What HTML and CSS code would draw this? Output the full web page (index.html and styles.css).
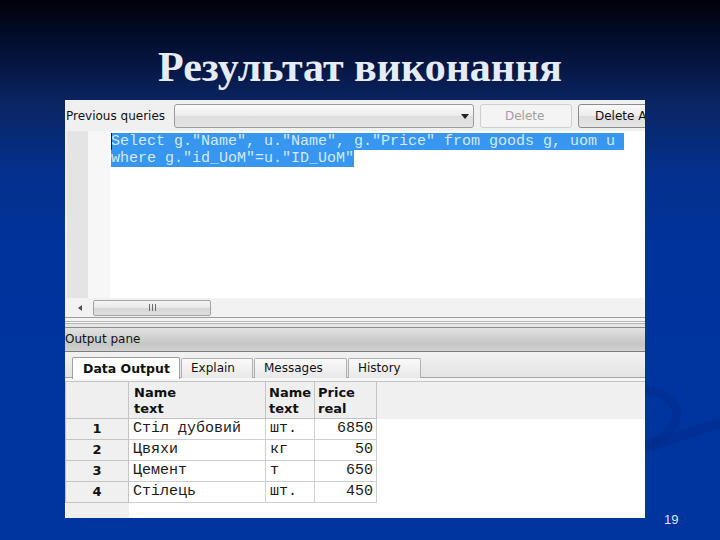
FILE: index.html
```html
<!DOCTYPE html>
<html lang="uk">
<head>
<meta charset="utf-8">
<title>Результат виконання</title>
<link rel="stylesheet" href="styles.css">
</head>
<body>
<div class="slide">
  <svg class="swoosh" width="80" height="160" viewBox="0 0 80 160" aria-hidden="true">
    <path d="M0,8 C22,10 36,22 30,40 C26,50 14,58 4,62" fill="none" stroke="#002c8a" stroke-width="9" stroke-linecap="round" opacity="0.45"/>
    <path d="M0,66 C24,58 50,48 80,40" fill="none" stroke="#002c8a" stroke-width="10" stroke-linecap="round" opacity="0.45"/>
  </svg>
  <h1 class="title">Результат виконання</h1>
  <div class="content">
    <div class="panel">
      <div class="toolbar">
        <span class="label">Previous queries</span>
        <div class="combo"><span class="arrow"></span></div>
        <button class="btn btn-disabled">Delete</button>
        <button class="btn btn-all">Delete All</button>
      </div>
      <div class="code-wrap">
        <div class="gutter1"></div>
        <div class="gutter2"></div>
        <div class="code">
          <div class="line"><span class="caret"></span><span class="sel">Select g."Name", u."Name", g."Price" from goods g, uom u </span></div>
          <div class="line"><span class="sel">where g."id_UoM"=u."ID_UoM"</span></div>
        </div>
      </div>
      <div class="hscroll">
        <span class="sarrow"></span>
        <div class="thumb"><span class="grip"></span></div>
      </div>
      <div class="splitter"></div>
      <div class="pane-head">Output pane</div>
      <div class="tabs">
        <div class="tab tab-active tab-data">Data Output</div>
        <div class="tab tab-explain">Explain</div>
        <div class="tab tab-messages">Messages</div>
        <div class="tab tab-history">History</div>
      </div>
      <table class="grid">
        <colgroup>
          <col class="c-rn"><col class="c-name"><col class="c-uom"><col class="c-price"><col>
        </colgroup>
        <thead>
          <tr class="hrow">
            <th class="rn-head"></th>
            <th>Name<br>text</th>
            <th>Name<br>text</th>
            <th>Price<br>real</th>
            <th class="fill-head"></th>
          </tr>
        </thead>
        <tbody>
          <tr class="drow"><td class="rn">1</td><td>Стіл дубовий</td><td>шт.</td><td class="num">6850</td><td class="fill"></td></tr>
          <tr class="drow"><td class="rn">2</td><td>Цвяхи</td><td>кг</td><td class="num">50</td><td class="fill"></td></tr>
          <tr class="drow"><td class="rn">3</td><td>Цемент</td><td>т</td><td class="num">650</td><td class="fill"></td></tr>
          <tr class="drow"><td class="rn">4</td><td>Стілець</td><td>шт.</td><td class="num">450</td><td class="fill"></td></tr>
          <tr class="rest"><td class="rn-rest"></td><td class="fill" colspan="4"></td></tr>
        </tbody>
      </table>
    </div>
    <div class="slide-num">19</div>
  </div>
</div>
</body>
</html>
```

FILE: styles.css
```css
* { box-sizing: border-box; }

html, body {
  margin: 0;
  padding: 0;
}

body {
  width: 720px;
  height: 540px;
  overflow: hidden;
  background: #00339c;
}

.slide {
  position: relative;
  width: 720px;
  height: 540px;
  background: linear-gradient(180deg, #00020a 0%, #04123a 10%, #0a2562 19%, #04308e 32%, #00339c 46%, #00349f 100%);
  overflow: hidden;
}

.swoosh {
  position: absolute;
  left: 645px;
  top: 382px;
}

.title {
  margin: 0;
  padding-top: 46px;
  height: 100px;
  text-align: center;
  font-family: "Liberation Serif", "DejaVu Serif", serif;
  font-weight: bold;
  font-size: 42px;
  line-height: 42px;
  color: #e6ecf7;
}

.content {
  display: flex;
  align-items: flex-end;
  padding-left: 65px;
}

.panel {
  position: relative;
  width: 580px;
  height: 418px;
  background: #f0f0f0;
  overflow: hidden;
  display: flex;
  flex-direction: column;
  font-family: "DejaVu Sans", "Liberation Sans", sans-serif;
  font-size: 12px;
  color: #111;
}

.slide-num {
  margin-left: 19px;
  margin-bottom: -9px;
  font-family: "Liberation Sans", Arial, sans-serif;
  font-size: 13px;
  line-height: 14px;
  color: #dce6ff;
}

/* toolbar */
.toolbar {
  height: 31px;
  flex: none;
  display: flex;
  align-items: center;
  padding-left: 1px;
  background: #f0f0f0;
  white-space: nowrap;
}

.label {
  width: 108px;
  flex: none;
}

.combo {
  position: relative;
  width: 300px;
  height: 24px;
  flex: none;
  border: 1px solid #9c9c9c;
  border-radius: 3px;
  background: linear-gradient(180deg, #fbfbfb 0%, #ececec 50%, #dedede 51%, #e4e4e4 100%);
}

.arrow {
  position: absolute;
  right: 4px;
  top: 9px;
  width: 0;
  height: 0;
  border-left: 4px solid transparent;
  border-right: 4px solid transparent;
  border-top: 5px solid #222;
}

.btn {
  height: 24px;
  flex: none;
  margin: 0 0 0 6px;
  padding: 0;
  border: 1px solid #a8a8a8;
  border-radius: 3px;
  background: linear-gradient(180deg, #fafafa 0%, #ececec 50%, #dcdcdc 51%, #e6e6e6 100%);
  font-family: "DejaVu Sans", "Liberation Sans", sans-serif;
  font-size: 12px;
  color: #111;
  text-align: left;
  white-space: nowrap;
}

.btn-disabled {
  width: 92px;
  padding-left: 24px;
  color: #a0a0a0;
  border-color: #cfcfcf;
  background: #f4f4f4;
}

.btn-all {
  width: 90px;
  padding-left: 16px;
  border-color: #8c8c8c;
}

/* editor */
.code-wrap {
  height: 167px;
  flex: none;
  display: flex;
  background: #ffffff;
}

.gutter1 {
  width: 23px;
  flex: none;
  background: #e4e4e4;
  border-left: 2px solid #f0f0f0;
}

.gutter2 {
  width: 22px;
  flex: none;
  background: #f7f7f7;
}

.code {
  flex: 1;
  padding-top: 2px;
  padding-left: 1px;
  font-family: "Courier New", "Nimbus Mono PS", "FreeMono", "Liberation Mono", monospace;
  font-size: 15px;
  line-height: 17px;
}

.line {
  height: 17px;
  white-space: pre;
}

.sel {
  background: #3797f0;
  color: #d2e9ff;
}

.caret {
  display: inline-block;
  width: 1px;
  height: 17px;
  margin-right: -1px;
  vertical-align: top;
  background: #102040;
  position: relative;
  z-index: 1;
}

.hscroll {
  height: 19px;
  flex: none;
  display: flex;
  align-items: center;
  padding-left: 13px;
  background: #f2f2f2;
}

.sarrow {
  width: 0;
  height: 0;
  flex: none;
  border-top: 3px solid transparent;
  border-bottom: 3px solid transparent;
  border-right: 4px solid #505050;
}

.thumb {
  width: 118px;
  height: 16px;
  flex: none;
  margin-left: 11px;
  display: flex;
  align-items: center;
  justify-content: center;
  border: 1px solid #a4a4a4;
  border-radius: 2px;
  background: linear-gradient(180deg, #f6f6f6 0%, #e8e8e8 50%, #d6d6d6 51%, #dedede 100%);
}

.grip {
  width: 7px;
  height: 7px;
  background: repeating-linear-gradient(90deg, #6a6a6a 0, #6a6a6a 1px, transparent 1px, transparent 3px);
}

.splitter {
  height: 11px;
  flex: none;
  background: linear-gradient(180deg,
    #9c9c9c 0, #9c9c9c 1px,
    #f4f4f4 1px, #f4f4f4 4px,
    #b4b4b4 4px, #b4b4b4 5px,
    #fafafa 5px, #fafafa 6px,
    #b4b4b4 6px, #b4b4b4 7px,
    #e6e6e6 7px, #e6e6e6 10px,
    #8c8c8c 10px, #8c8c8c 11px);
}

.pane-head {
  height: 24px;
  flex: none;
  padding-left: 0;
  line-height: 23px;
  border-bottom: 1px solid #7c7c7c;
  background: linear-gradient(180deg, #e2e2e2 0%, #cfcfcf 45%, #c6c6c6 70%, #d2d2d2 100%);
}

/* tabs */
.tabs {
  height: 29px;
  flex: none;
  display: flex;
  align-items: flex-end;
  padding: 0 0 3px 7px;
  background-color: #ececec;
  background-image: linear-gradient(180deg, #f2f2f2 0, #e4e4e4 25px, #a4a4a4 25px, #a4a4a4 26px, #f6f6f6 26px);
}

.tab {
  height: 20px;
  margin-right: 1px;
  padding-left: 9px;
  line-height: 19px;
  border: 1px solid #b0b0b0;
  border-bottom: none;
  border-radius: 2px 2px 0 0;
  background: linear-gradient(180deg, #fafafa 0%, #e8e8e8 100%);
  white-space: nowrap;
}

.tab-active {
  height: 22px;
  margin-bottom: -1px;
  padding-left: 10px;
  line-height: 22px;
  background: #ffffff;
  font-weight: bold;
  font-size: 12.5px;
  border-color: #a0a0a0;
}

.tab-data { width: 108px; }
.tab-explain { width: 72px; }
.tab-messages { width: 93px; }
.tab-history { width: 73px; }

/* grid */
.grid {
  flex: none;
  width: 580px;
  height: 137px;
  table-layout: fixed;
  border-collapse: collapse;
  background: #ffffff;
}

.c-rn { width: 63px; }
.c-name { width: 137px; }
.c-uom { width: 49px; }
.c-price { width: 62px; }

.grid th {
  height: 37px;
  padding: 3px 0 0 5px;
  vertical-align: top;
  text-align: left;
  font-family: "DejaVu Sans", "Liberation Sans", sans-serif;
  font-size: 13px;
  line-height: 16px;
  font-weight: bold;
  color: #111;
  background: #efefef;
  border: 1px solid #c4c4c4;
}

.grid th:nth-child(3) { padding-left: 3px; }
.grid th:nth-child(4) { padding-left: 3px; }

.grid th.fill-head {
  border: none;
  border-top: 1px solid #c4c4c4;
  background: #f0f0f0;
}

.grid td {
  height: 21px;
  padding: 0 0 0 4px;
  font-family: "Courier New", "Nimbus Mono PS", "FreeMono", "Liberation Mono", monospace;
  font-size: 15px;
  line-height: 18px;
  color: #1a1a1a;
  border: 1px solid #cfcfcf;
  white-space: nowrap;
  overflow: hidden;
}

.grid td.num {
  text-align: right;
  padding: 0 3px 0 0;
}

.grid td.rn {
  padding: 0;
  text-align: center;
  font-family: "DejaVu Sans", "Liberation Sans", sans-serif;
  font-size: 13px;
  font-weight: bold;
  color: #111;
  background: #f0f0f0;
  border-color: #c4c4c4;
}

.grid td.fill {
  border: none;
  background: #ffffff;
}

.grid tr.rest td {
  height: auto;
  border: none;
}

.grid td.rn-rest {
  background: #f0f0f0;
}
```
